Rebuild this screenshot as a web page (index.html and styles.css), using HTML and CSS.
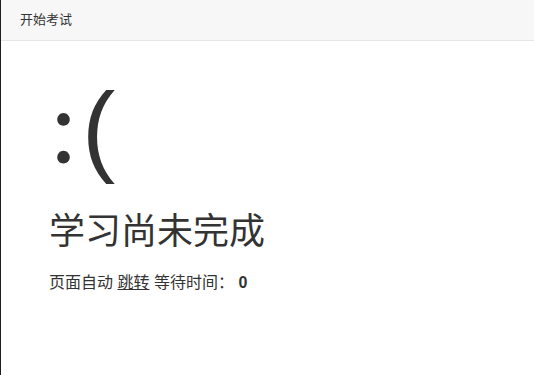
FILE: index.html
```html
<!DOCTYPE html>
<html lang="zh">
<head>
<meta charset="utf-8">
<title>开始考试</title>
<link rel="stylesheet" href="styles.css">
</head>
<body>
<div class="page">
  <header class="topbar">开始考试</header>
  <main class="content">
    <div class="face"><span class="colon">:</span>(</div>
    <h1 class="title">学习尚未完成</h1>
    <p class="info">页面自动 <a class="jump" href="#">跳转</a> 等待时间： <b class="wait">0</b></p>
  </main>
</div>
</body>
</html>
```
FILE: styles.css
```css
html, body {
  margin: 0;
  padding: 0;
  height: 100%;
}
body {
  font-family: "Liberation Sans", "Noto Sans CJK SC", sans-serif;
  color: #333;
  background: #fff;
}
.page {
  height: 100%;
  box-sizing: border-box;
  border-left: 1px solid #1e1e1e;
}
.topbar {
  height: 40px;
  line-height: 40px;
  background: #f7f7f7;
  border-bottom: 1px solid #e6e6e6;
  padding-left: 19px;
  font-size: 13px;
  color: #333;
}
.content {
  padding: 0 0 0 48px;
}
.face {
  font-size: 100px;
  line-height: 1;
  margin-top: 33px;
  height: 136px;
  color: #333;
  padding-left: 2px;
}
.colon {
  font-family: Lato, "Liberation Sans", sans-serif;
  margin-right: 6px;
}
.title {
  font-size: 36px;
  font-weight: normal;
  line-height: 44px;
  margin: 0;
  color: #333;
}
.info {
  font-size: 16px;
  margin: 18px 0 0;
  line-height: 22px;
}
.jump {
  color: #333;
  text-decoration: underline;
}
.wait {
  font-weight: bold;
}
```
